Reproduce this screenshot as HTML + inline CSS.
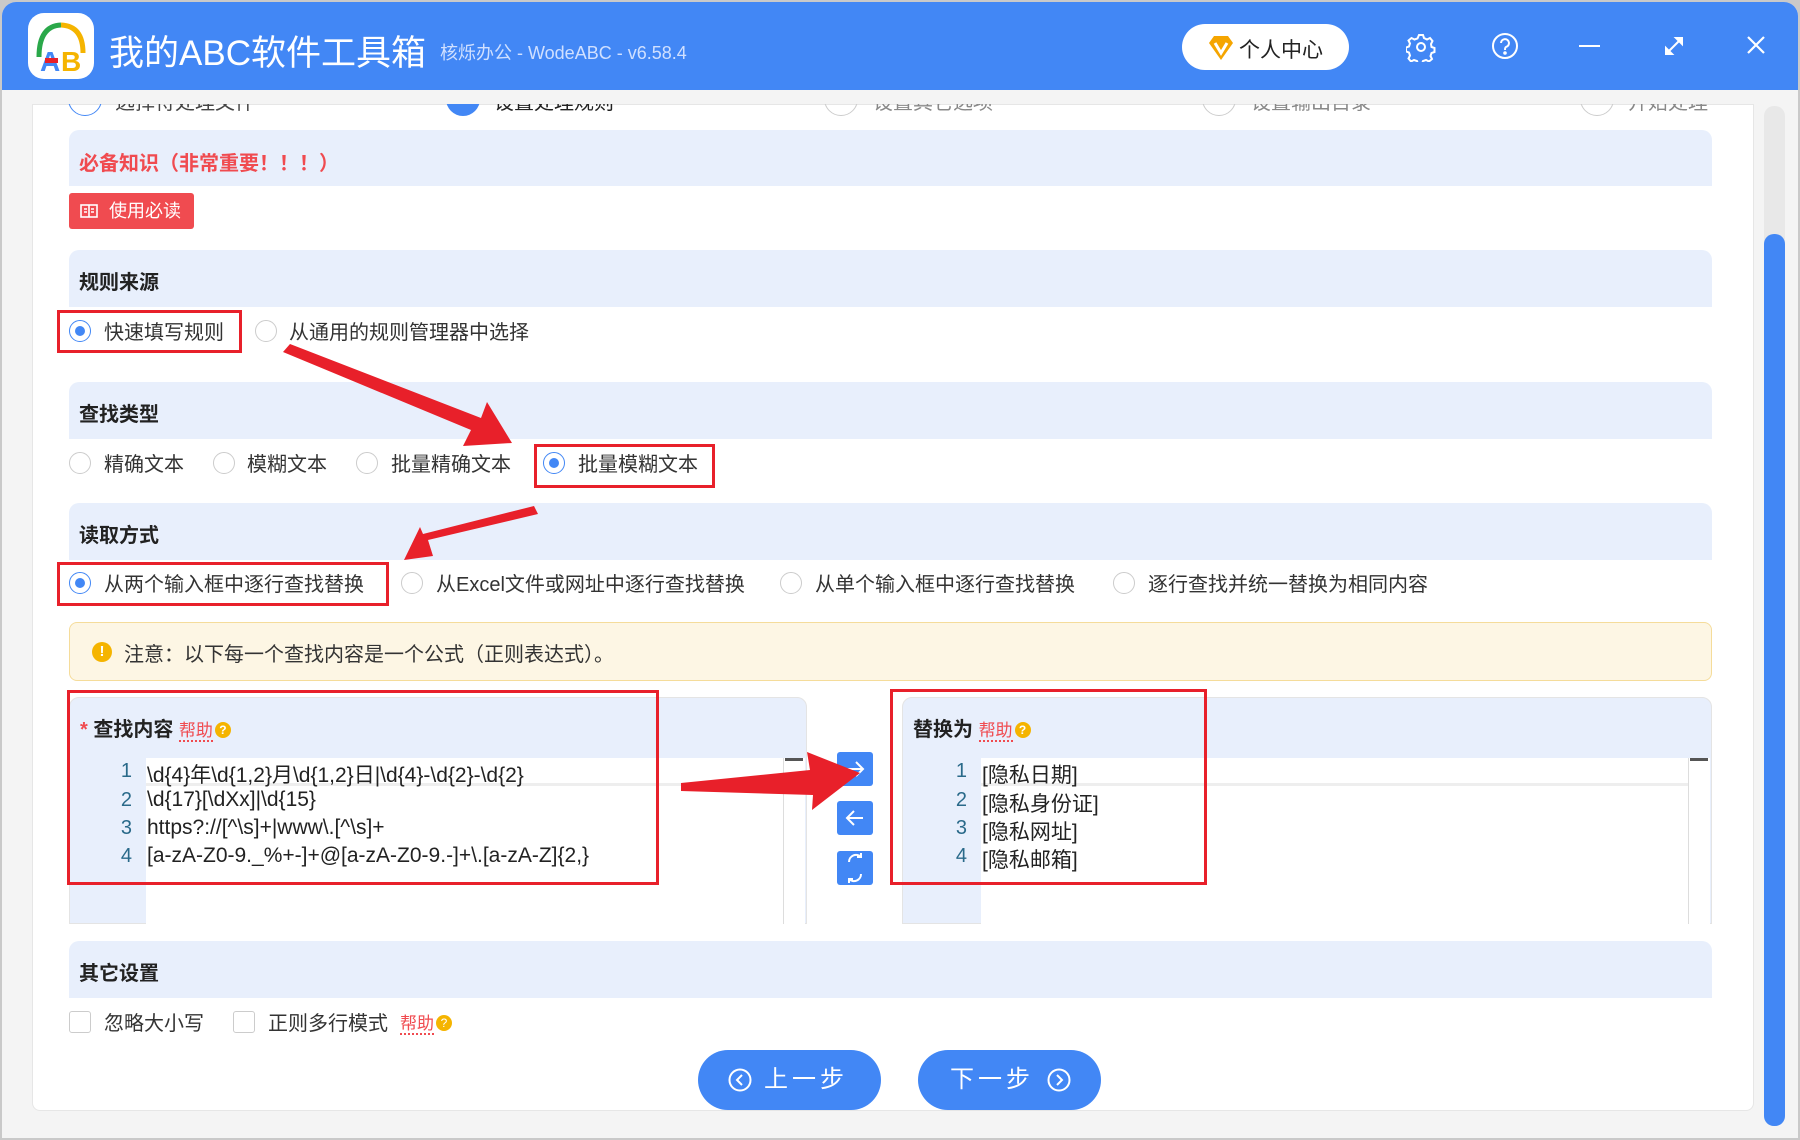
<!DOCTYPE html><html><head><meta charset="utf-8"><style>
*{margin:0;padding:0;box-sizing:border-box}
body{width:1800px;height:1140px;background:#c9c9c9;font-family:"Liberation Sans","Noto Sans CJK SC",sans-serif;position:relative;overflow:hidden;color:#333}
.a{position:absolute}
.win{left:2px;top:2px;width:1796px;height:1136px;background:#f4f4f4;border-radius:14px 14px 0 0;overflow:hidden}
.hd{left:0;top:0;width:1796px;height:88px;background:#4287f5}
.panel{left:30px;top:102px;width:1722px;height:1007px;background:#fff;border:1px solid #e6e6e6;border-radius:0 0 8px 8px}
.box{background:#e8effc;border-radius:10px 10px 0 0;left:69px;width:1643px}
.lbl{font-size:20px;font-weight:bold;color:#222;left:79px}
.t{font-size:20px;color:#333;white-space:nowrap}
.rd{width:22px;height:22px;border:1px solid #ccc;border-radius:50%;background:#fff}
.rd.on{border-color:#4287f5}
.rd.on::after{content:"";position:absolute;left:5px;top:5px;width:10px;height:10px;border-radius:50%;background:#4287f5}
.red{border:3px solid #e8202a}
.cb{width:22px;height:22px;border:1px solid #ccc;border-radius:3px;background:#fff}
.help{color:#f04b50;font-size:17px;border-bottom:2px dotted #f04b50}
.q{display:inline-block;width:16px;height:16px;border-radius:50%;background:#f5b400;color:#fff;font-size:12px;text-align:center;line-height:16px;vertical-align:2px;margin-left:2px}
.code{font-size:21px;color:#222;white-space:nowrap}
.num{font-size:20px;color:#2a6a8a;text-align:right;width:30px}
.sb{width:36px;height:34px;background:#4287f5;border-radius:3px}
.btn{height:60px;width:183px;background:#4287f5;border-radius:30px;color:#fff;font-size:24px;line-height:60px;letter-spacing:4px}
</style></head><body>
<div class="a win">
<div class="a hd"></div>
<div class="a panel"></div>
</div>
<!-- logo -->
<div class="a" style="left:28px;top:13px;width:66px;height:66px;background:#fff;border-radius:16px"></div>
<svg class="a" style="left:28px;top:13px" width="66" height="66" viewBox="0 0 66 66">
<path d="M11 44 Q11 13 33 12" fill="none" stroke="#2aa84a" stroke-width="5"/>
<path d="M33 12 Q55 13 55 40" fill="none" stroke="#f5b400" stroke-width="5"/>
<text x="12" y="58" font-size="28" font-weight="bold" fill="#4287f5" font-family="Liberation Sans">A</text>
<text x="33" y="58" font-size="28" font-weight="bold" fill="#f5b400" font-family="Liberation Sans">B</text>
<rect x="17" y="45" width="13" height="5" fill="#e8202a"/>
</svg>
<div class="a" style="left:109px;top:25px;font-size:35px;color:#fff">我的ABC软件工具箱</div>
<div class="a" style="left:440px;top:39px;font-size:18px;color:#d0e0ff">核烁办公 - WodeABC - v6.58.4</div>
<div class="a" style="left:1182px;top:24px;width:167px;height:46px;background:#fff;border-radius:23px"></div>
<svg class="a" style="left:1207px;top:35px" width="28" height="26" viewBox="0 0 28 26"><path d="M2 8 L7 1 H21 L26 8 L14 25 Z" fill="#f5a500"/><path d="M8 8 L14 18 L20 8" fill="none" stroke="#fff" stroke-width="3"/></svg>
<div class="a" style="left:1239px;top:34px;font-size:21px;color:#222">个人中心</div>
<svg class="a" style="left:1406px;top:32px" width="30" height="30" viewBox="0 0 30 30" fill="none" stroke="#fff" stroke-width="2"><circle cx="15" cy="15" r="4"/><path d="M13 3h4l1 3 3 1.5 3-1.5 2.5 3-1.5 3 .5 3 3 1v4l-3 1-1 3 1.5 3-3 2.5-3-1.5-3 1-1 3h-4l-1-3-3-1-3 1.5-2.5-3 1.5-3-1-3-3-1v-4l3-1 1-3-1.5-3 3-2.5 3 1.5 3-1z"/></svg>
<svg class="a" style="left:1491px;top:32px" width="28" height="28" viewBox="0 0 28 28" fill="none" stroke="#fff" stroke-width="2"><circle cx="14" cy="14" r="12"/><path d="M10 11a4 4 0 1 1 5 4c-1 .5-1 1.5-1 3"/><circle cx="14" cy="21" r=".8" fill="#fff"/></svg>
<div class="a" style="left:1579px;top:45px;width:21px;height:2px;background:#fff"></div>
<svg class="a" style="left:1663px;top:35px" width="22" height="22" viewBox="0 0 22 22" stroke="#fff" stroke-width="2" fill="#fff"><path d="M4 18 L18 4"/><path d="M13 3h6v6z"/><path d="M3 13v6h6z"/></svg>
<svg class="a" style="left:1746px;top:35px" width="20" height="20" stroke="#fff" stroke-width="2.2"><path d="M2 2L18 18M18 2L2 18"/></svg>
<!-- steps row (clipped) -->
<div class="a" style="left:30px;top:104px;width:1722px;height:14px;overflow:hidden">
<div class="a" style="left:38px;top:-22px;width:34px;height:34px;border:1px solid #4287f5;border-radius:50%"></div>
<div class="a t" style="left:85px;top:-18px;color:#444">选择待处理文件</div>
<div class="a" style="left:416px;top:-22px;width:34px;height:34px;background:#4287f5;border-radius:50%"></div>
<div class="a t" style="left:464px;top:-18px;color:#222">设置处理规则</div>
<div class="a" style="left:794px;top:-22px;width:34px;height:34px;border:1px solid #ccc;border-radius:50%"></div>
<div class="a t" style="left:843px;top:-18px;color:#888">设置其它选项</div>
<div class="a" style="left:1172px;top:-22px;width:34px;height:34px;border:1px solid #ccc;border-radius:50%"></div>
<div class="a t" style="left:1221px;top:-18px;color:#888">设置输出目录</div>
<div class="a" style="left:1550px;top:-22px;width:34px;height:34px;border:1px solid #ccc;border-radius:50%"></div>
<div class="a t" style="left:1598px;top:-18px;color:#888">开始处理</div>
</div>
<!-- scrollbar -->
<div class="a" style="left:1764px;top:106px;width:21px;height:1020px;background:#e8e8e8;border-radius:10px"></div>
<div class="a" style="left:1764px;top:234px;width:21px;height:892px;background:#4287f5;border-radius:10px"></div>
<!-- 必备知识 -->
<div class="a box" style="top:130px;height:56px"></div>
<div class="a" style="left:79px;top:147px;font-size:20px;font-weight:bold;color:#f04b50">必备知识（非常重要！！！）</div>
<div class="a" style="left:69px;top:193px;width:125px;height:36px;background:#f04b50;border-radius:3px;color:#fff;font-size:18px;line-height:36px;padding-left:40px">使用必读</div>
<svg class="a" style="left:80px;top:203px" width="18" height="16" fill="none" stroke="#fff" stroke-width="1.6"><rect x="1" y="2" width="16" height="12"/><path d="M9 2v12M4 6h3M4 9h3M11 6h3M11 9h3"/></svg>
<!-- 规则来源 -->
<div class="a box" style="top:250px;height:57px"></div>
<div class="a lbl" style="top:266px">规则来源</div>
<div class="a red" style="left:57px;top:310px;width:185px;height:43px"></div>
<div class="a rd on" style="left:69px;top:320px"></div><div class="a t" style="left:104px;top:316px">快速填写规则</div>
<div class="a rd" style="left:255px;top:320px"></div><div class="a t" style="left:289px;top:316px">从通用的规则管理器中选择</div>
<!-- 查找类型 -->
<div class="a box" style="top:382px;height:57px"></div>
<div class="a lbl" style="top:398px">查找类型</div>
<div class="a rd" style="left:69px;top:452px"></div><div class="a t" style="left:104px;top:448px">精确文本</div>
<div class="a rd" style="left:213px;top:452px"></div><div class="a t" style="left:247px;top:448px">模糊文本</div>
<div class="a rd" style="left:356px;top:452px"></div><div class="a t" style="left:391px;top:448px">批量精确文本</div>
<div class="a red" style="left:534px;top:444px;width:181px;height:44px"></div>
<div class="a rd on" style="left:543px;top:452px"></div><div class="a t" style="left:578px;top:448px">批量模糊文本</div>
<!-- 读取方式 -->
<div class="a box" style="top:503px;height:57px"></div>
<div class="a lbl" style="top:519px">读取方式</div>
<div class="a red" style="left:57px;top:562px;width:332px;height:44px"></div>
<div class="a rd on" style="left:69px;top:572px"></div><div class="a t" style="left:104px;top:568px">从两个输入框中逐行查找替换</div>
<div class="a rd" style="left:401px;top:572px"></div><div class="a t" style="left:436px;top:568px">从Excel文件或网址中逐行查找替换</div>
<div class="a rd" style="left:780px;top:572px"></div><div class="a t" style="left:815px;top:568px">从单个输入框中逐行查找替换</div>
<div class="a rd" style="left:1113px;top:572px"></div><div class="a t" style="left:1148px;top:568px">逐行查找并统一替换为相同内容</div>
<!-- notice -->
<div class="a" style="left:69px;top:622px;width:1643px;height:59px;background:#fdf6e4;border:1px solid #f5dc9a;border-radius:8px"></div>
<div class="a" style="left:92px;top:642px;width:20px;height:20px;border-radius:50%;background:#f5b400;color:#fff;font-size:15px;font-weight:bold;text-align:center;line-height:20px">!</div>
<div class="a t" style="left:124px;top:638px;color:#333">注意：以下每一个查找内容是一个公式（正则表达式）。</div>
<!-- left editor -->
<div class="a" style="left:69px;top:697px;width:738px;height:227px;background:#e8effc;border-radius:10px 10px 0 0;border:1px solid #e4e4e4"></div>
<div class="a" style="left:146px;top:758px;width:637px;height:166px;background:#fff"></div>
<div class="a" style="left:146px;top:760px;width:637px;height:26px;background:#fff;border-bottom:3px solid #eee"></div>
<div class="a" style="left:783px;top:758px;width:22px;height:166px;background:#fff;border-left:1px solid #ddd"></div>
<div class="a" style="left:785px;top:758px;width:18px;height:3px;background:#555"></div>
<div class="a" style="left:80px;top:713px;font-size:20px;font-weight:bold;color:#222"><span style="color:#f04b50">* </span>查找内容 <span class="help" style="font-weight:normal">帮助</span><span class="q">?</span></div>
<div class="a num" style="left:102px;top:760px">1</div><div class="a code" style="left:147px;top:759px">\d{4}年\d{1,2}月\d{1,2}日|\d{4}-\d{2}-\d{2}</div>
<div class="a num" style="left:102px;top:789px">2</div><div class="a code" style="left:147px;top:788px">\d{17}[\dXx]|\d{15}</div>
<div class="a num" style="left:102px;top:817px">3</div><div class="a code" style="left:147px;top:816px">https?://[^\s]+|www\.[^\s]+</div>
<div class="a num" style="left:102px;top:845px">4</div><div class="a code" style="left:147px;top:844px">[a-zA-Z0-9._%+-]+@[a-zA-Z0-9.-]+\.[a-zA-Z]{2,}</div>
<div class="a red" style="left:67px;top:690px;width:592px;height:195px"></div>
<!-- middle buttons -->
<div class="a sb" style="left:837px;top:752px"></div>
<div class="a sb" style="left:837px;top:801px"></div>
<div class="a sb" style="left:837px;top:851px"></div>
<svg class="a" style="left:837px;top:752px" width="36" height="134" fill="none" stroke="#fff" stroke-width="2">
<path d="M10 17h16M19 10l7 7-7 7"/>
<path d="M26 66h-16M17 59l-7 7 7 7"/>
<path d="M12 110a7 7 0 0 1 12-5M24 122a7 7 0 0 1-12 5M24 101v4h-4M12 131v-4h4"/>
</svg>
<!-- right editor -->
<div class="a" style="left:902px;top:697px;width:810px;height:227px;background:#e8effc;border-radius:10px 10px 0 0;border:1px solid #e4e4e4"></div>
<div class="a" style="left:981px;top:758px;width:707px;height:166px;background:#fff"></div>
<div class="a" style="left:981px;top:760px;width:707px;height:26px;background:#fff;border-bottom:3px solid #eee"></div>
<div class="a" style="left:1688px;top:758px;width:22px;height:166px;background:#fff;border-left:1px solid #ddd"></div>
<div class="a" style="left:1690px;top:758px;width:18px;height:3px;background:#555"></div>
<div class="a" style="left:913px;top:713px;font-size:20px;font-weight:bold;color:#222">替换为 <span class="help" style="font-weight:normal">帮助</span><span class="q">?</span></div>
<div class="a num" style="left:937px;top:760px">1</div><div class="a code" style="left:982px;top:759px">[隐私日期]</div>
<div class="a num" style="left:937px;top:789px">2</div><div class="a code" style="left:982px;top:788px">[隐私身份证]</div>
<div class="a num" style="left:937px;top:817px">3</div><div class="a code" style="left:982px;top:816px">[隐私网址]</div>
<div class="a num" style="left:937px;top:845px">4</div><div class="a code" style="left:982px;top:844px">[隐私邮箱]</div>
<div class="a red" style="left:890px;top:689px;width:317px;height:196px"></div>
<!-- 其它设置 -->
<div class="a box" style="top:941px;height:57px"></div>
<div class="a lbl" style="top:957px">其它设置</div>
<div class="a cb" style="left:69px;top:1011px"></div><div class="a t" style="left:104px;top:1007px">忽略大小写</div>
<div class="a cb" style="left:233px;top:1011px"></div><div class="a t" style="left:268px;top:1007px">正则多行模式</div>
<div class="a" style="left:400px;top:1009px"><span class="help">帮助</span><span class="q">?</span></div>
<!-- nav buttons -->
<div class="a btn" style="left:698px;top:1050px;padding-left:66px">上一步</div>
<svg class="a" style="left:728px;top:1068px" width="24" height="24" fill="none" stroke="#fff" stroke-width="2"><circle cx="12" cy="12" r="10.5"/><path d="M14 7l-5 5 5 5"/></svg>
<div class="a btn" style="left:918px;top:1050px;padding-left:32px">下一步</div>
<svg class="a" style="left:1047px;top:1068px" width="24" height="24" fill="none" stroke="#fff" stroke-width="2"><circle cx="12" cy="12" r="10.5"/><path d="M10 7l5 5-5 5"/></svg>
<!-- arrows -->
<svg class="a" style="left:0;top:0" width="1800" height="1140">
<g fill="#e8202a">
<polygon points="283,352 290,344 481,418 487,402 512,443 463,446 471,430"/>
<polygon points="534,506 538,514 428,540 433,556 404,560 420,527 423,534"/>
<polygon points="681,783 681,791 813,795 812,810 860,773 807,752 810,770"/>
</g></svg>
</body></html>
